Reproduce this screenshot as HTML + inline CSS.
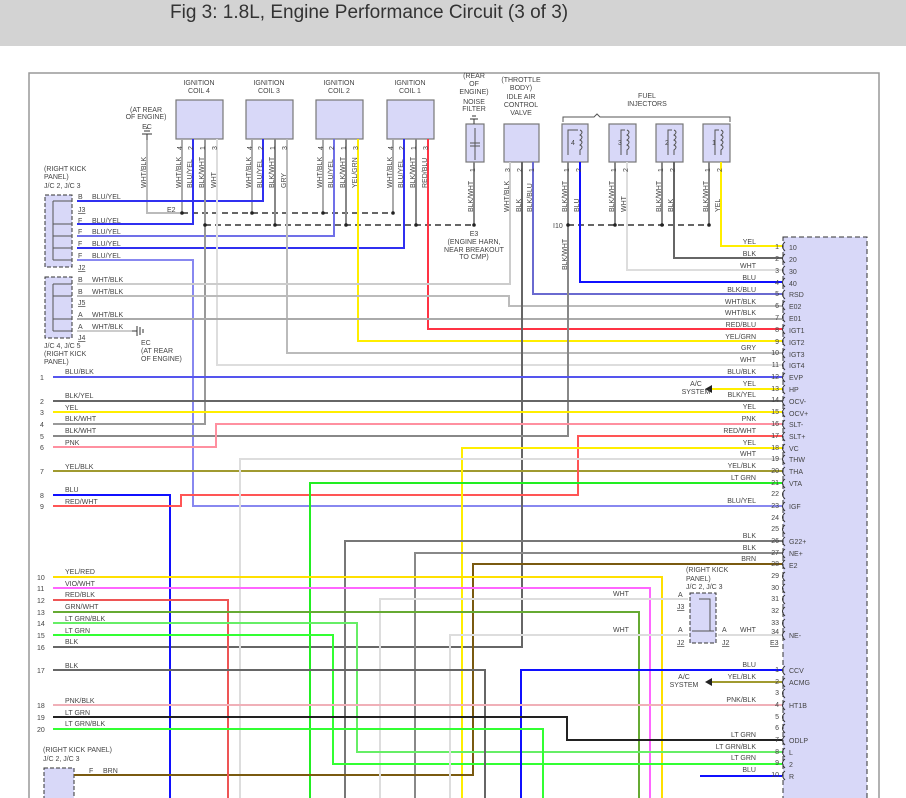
<!DOCTYPE html>
<html><head><meta charset="utf-8"><style>
html,body{margin:0;padding:0;background:#fff;width:906px;height:798px;overflow:hidden}
#hdr{position:absolute;left:0;top:0;width:906px;height:46px;background:#d3d3d3}
#hdr span{position:absolute;left:170px;top:2px;font:19px "Liberation Sans",sans-serif;color:#333}
svg{position:absolute;left:0;top:0}
text{font-family:"Liberation Sans",sans-serif;font-size:7px;fill:#444}
.w{fill:none;stroke-width:2}
</style></head><body>
<div id="hdr"><span>Fig 3: 1.8L, Engine Performance Circuit (3 of 3)</span></div>
<svg width="906" height="798" viewBox="0 0 906 798">
<!-- frame -->
<path d="M29,798 V73 H879 V798" fill="none" stroke="#999" stroke-width="1.5"/>
<!-- ECM -->
<rect x="783" y="237" width="84" height="570" fill="#d8d8f8" stroke="#333" stroke-dasharray="5,3"/>
<!-- component boxes -->
<g fill="#d8d8f8" stroke="#777" stroke-width="1.2">
<rect x="176" y="100" width="47" height="39"/><rect x="246" y="100" width="47" height="39"/>
<rect x="316" y="100" width="47" height="39"/><rect x="387" y="100" width="47" height="39"/>
<rect x="466" y="124" width="18" height="38"/><rect x="504" y="124" width="35" height="38"/>
<rect x="562" y="124" width="26" height="38"/><rect x="609" y="124" width="27" height="38"/>
<rect x="656" y="124" width="27" height="38"/><rect x="703" y="124" width="27" height="38"/>
</g>
<g fill="#d8d8f8" stroke="#333" stroke-dasharray="4,2">
<rect x="45" y="195" width="27" height="72"/><rect x="45" y="277" width="27" height="61"/>
<rect x="690" y="593" width="26" height="50"/><rect x="44" y="768" width="30" height="40"/>
</g>
<!-- kick panel internal -->
<g stroke="#555" fill="none" stroke-width="1">
<path d="M53,201 V260 M53,201 H72 M53,224 H72 M53,236 H72 M53,248 H72 M53,260 H72"/>
<path d="M53,284 V331 M53,284 H72 M53,296 H72 M53,319 H72 M53,331 H72"/>
<path d="M699,599 H710 V631 M692,631 H714"/>
</g>
<!-- injector coils -->
<g stroke="#555" fill="none" stroke-width="1">
<path d="M568,155 V130 H578 M621,155 V130 H625 M668,155 V130 H672 M715,155 V130 H719"/>
<path d="M580,130 q4,2 0,5 q4,2 0,5 q4,2 0,5 q4,2 0,5 V155 M627,130 q4,2 0,5 q4,2 0,5 q4,2 0,5 q4,2 0,5 V155 M674,130 q4,2 0,5 q4,2 0,5 q4,2 0,5 q4,2 0,5 V155 M721,130 q4,2 0,5 q4,2 0,5 q4,2 0,5 q4,2 0,5 V155"/>
<path d="M475,128 V160 M470,143 H480 M470,146 H480"/>
<path d="M563,122 V117 H594 l3,-3 l3,3 H730 V122"/>
</g>
<text x="571" y="145">4</text><text x="618" y="145">3</text><text x="665" y="145">2</text><text x="712" y="145">1</text>
<!-- dashed splices -->
<g stroke="#333" stroke-width="1.5" stroke-dasharray="6,4" fill="none">
<path d="M182,213 H393"/><path d="M205,225 H474"/><path d="M568,225 H709"/>
</g>
<!-- wires -->
<g class="w">
<path stroke="#bbb" d="M147,140 V213 H182"/>
<path stroke="#aaa" d="M182,139 V213 M252,139 V213 M323,139 V213 M393,139 V213"/>
<path stroke="#888" d="M275,139 V225 M346,139 V225 M416,139 V225 M474,162 V225 M615,162 V225 M662,162 V225 M709,162 V225"/>
<path stroke="#3030f0" d="M193,139 V224 H77 M263,139 V201 H77 M404,139 V248 H77"/>
<path stroke="#7070e8" d="M334,139 V236 H77"/>
<path stroke="#8888f0" d="M77,260 H193 V506 H782"/>
<path stroke="#999" d="M205,139 V424 H53"/>
<path stroke="#ddd" d="M217,139 V365 H782"/>
<path stroke="#bbb" d="M287,139 V353 H782"/>
<path stroke="#ffee00" d="M358,139 V341 H782"/>
<path stroke="#ff3344" d="M428,139 V329 H782"/>
<path stroke="#ccc" d="M77,284 H510 V162"/>
<path stroke="#bbb" d="M77,296 H509 V306 H782"/>
<path stroke="#aaa" d="M77,319 H782"/>
<path stroke="#ccc" d="M77,331 H132"/>
<path stroke="#666" d="M522,162 V647 H53"/>
<path stroke="#6a6ad0" d="M533,162 V294 H782"/>
<path stroke="#888" d="M568,162 V436 H53"/>
<path stroke="#1010ff" d="M580,162 V282 H782"/>
<path stroke="#ddd" d="M627,162 V270 H782"/>
<path stroke="#666" d="M674,162 V258 H782"/>
<path stroke="#ffee00" d="M721,162 V246 H782"/>
<path stroke="#5555ee" d="M53,377 H782"/>
<path stroke="#666" d="M53,401 H782"/>
<path stroke="#ffee00" d="M53,412 H782"/>
<path stroke="#ff90a0" d="M53,447 H216 V424 H782"/>
<path stroke="#a09a30" d="M53,471 H782"/>
<path stroke="#1010ff" d="M53,495 H170 V798"/>
<path stroke="#ff5555" d="M53,506 H181 V495 H578 V436 H782"/>
<path stroke="#ffee00" d="M710,389 H782"/>
<path stroke="#ffee00" d="M462,798 V448 H782"/>
<path stroke="#ddd" d="M240,798 V459 H782"/>
<path stroke="#22ee22" d="M310,798 V483 H782"/>
<path stroke="#777" d="M345,798 V541 H782"/>
<path stroke="#888" d="M415,798 V553 H782"/>
<path stroke="#7a5a10" d="M74,775 H473 V564 H782"/>
<path stroke="#ffe000" d="M53,577 H662 V798"/>
<path stroke="#ff66ff" d="M53,588 H650 V798"/>
<path stroke="#ee5555" d="M53,600 H228 V798"/>
<path stroke="#ddd" d="M380,798 V599 H688"/>
<path stroke="#66aa33" d="M53,612 H639 V798"/>
<path stroke="#66ee66" d="M53,623 H357 V752 H782"/>
<path stroke="#33ff33" d="M53,635 H333 V764 H782"/>
<path stroke="#ddd" d="M450,798 V635 H688 M718,635 H782"/>
<path stroke="#666" d="M53,670 H485 V798"/>
<path stroke="#1010ff" d="M521,798 V670 H782"/>
<path stroke="#a09a30" d="M710,682 H782"/>
<path stroke="#f0b0b8" d="M53,705 H782"/>
<path stroke="#222" d="M53,717 H567 V740 H782"/>
<path stroke="#33ff33" d="M53,729 H543 V798"/>
<path stroke="#1010ff" d="M700,776 H782"/>
</g>
<!-- splice dots -->
<g fill="#222">
<circle cx="182" cy="213" r="1.8"/><circle cx="252" cy="213" r="1.8"/><circle cx="323" cy="213" r="1.8"/><circle cx="393" cy="213" r="1.8"/>
<circle cx="205" cy="225" r="1.8"/><circle cx="275" cy="225" r="1.8"/><circle cx="346" cy="225" r="1.8"/><circle cx="416" cy="225" r="1.8"/><circle cx="474" cy="225" r="1.8"/>
<circle cx="568" cy="225" r="1.8"/><circle cx="615" cy="225" r="1.8"/><circle cx="662" cy="225" r="1.8"/><circle cx="709" cy="225" r="1.8"/>
<path d="M705,389 l7,-4 v8 z M705,682 l7,-4 v8 z"/>
</g>
<!-- grounds -->
<g stroke="#333" fill="none"><path d="M147,140 V134 M142,134 H152 M144,131 H150 M146,128 H148"/>
<path d="M132,331 H137 M137,326 V336 M140,327 V335 M143,329 V333"/>
<path d="M474,124 V119 M470,119 H478 M472,116 H476"/></g>
<!-- ECM pin brackets -->
<g stroke="#333" fill="none" stroke-width="1">
<path d="M785,242 q-5,4 0,9 M785,254 q-5,4 0,9 M785,266 q-5,4 0,9 M785,278 q-5,4 0,9 M785,290 q-5,4 0,9 M785,301 q-5,4 0,9 M785,313 q-5,4 0,9 M785,325 q-5,4 0,9 M785,337 q-5,4 0,9 M785,349 q-5,4 0,9 M785,361 q-5,4 0,9 M785,373 q-5,4 0,9 M785,385 q-5,4 0,9 M785,397 q-5,4 0,9 M785,408 q-5,4 0,9 M785,420 q-5,4 0,9 M785,432 q-5,4 0,9 M785,444 q-5,4 0,9 M785,455 q-5,4 0,9 M785,467 q-5,4 0,9 M785,479 q-5,4 0,9 M785,490 q-5,4 0,9 M785,502 q-5,4 0,9 M785,513 q-5,4 0,9 M785,525 q-5,4 0,9 M785,537 q-5,4 0,9 M785,549 q-5,4 0,9 M785,560 q-5,4 0,9 M785,572 q-5,4 0,9 M785,584 q-5,4 0,9 M785,595 q-5,4 0,9 M785,607 q-5,4 0,9 M785,619 q-5,4 0,9 M785,631 q-5,4 0,9 M785,666 q-5,4 0,9 M785,678 q-5,4 0,9 M785,689 q-5,4 0,9 M785,701 q-5,4 0,9 M785,713 q-5,4 0,9 M785,724 q-5,4 0,9 M785,736 q-5,4 0,9 M785,748 q-5,4 0,9 M785,759 q-5,4 0,9 M785,771 q-5,4 0,9"/>
</g>
<!-- top labels -->
<g text-anchor="middle">
<text x="199" y="85">IGNITION</text><text x="199" y="93">COIL 4</text>
<text x="269" y="85">IGNITION</text><text x="269" y="93">COIL 3</text>
<text x="339" y="85">IGNITION</text><text x="339" y="93">COIL 2</text>
<text x="410" y="85">IGNITION</text><text x="410" y="93">COIL 1</text>
<text x="146" y="112">(AT REAR</text><text x="146" y="119">OF ENGINE)</text><text x="147" y="129">EC</text>
<text x="474" y="78">(REAR</text><text x="474" y="86">OF</text><text x="474" y="94">ENGINE)</text><text x="474" y="104">NOISE</text><text x="474" y="111">FILTER</text>
<text x="521" y="82">(THROTTLE</text><text x="521" y="90">BODY)</text><text x="521" y="99">IDLE AIR</text><text x="521" y="107">CONTROL</text><text x="521" y="115">VALVE</text>
<text x="647" y="98">FUEL</text><text x="647" y="106">INJECTORS</text>
<text x="474" y="236">E3</text><text x="474" y="244">(ENGINE HARN,</text><text x="474" y="252">NEAR BREAKOUT</text><text x="474" y="259">TO CMP)</text>
</g>
<text x="167" y="212">E2</text><text x="553" y="228">I10</text>
<!-- vertical wire labels -->
<g>
<text transform="translate(146,188) rotate(-90)">WHT/BLK</text>
<text transform="translate(181,188) rotate(-90)">WHT/BLK</text><text transform="translate(192,188) rotate(-90)">BLU/YEL</text><text transform="translate(204,188) rotate(-90)">BLK/WHT</text><text transform="translate(216,188) rotate(-90)">WHT</text>
<text transform="translate(251,188) rotate(-90)">WHT/BLK</text><text transform="translate(262,188) rotate(-90)">BLU/YEL</text><text transform="translate(274,188) rotate(-90)">BLK/WHT</text><text transform="translate(286,188) rotate(-90)">GRY</text>
<text transform="translate(322,188) rotate(-90)">WHT/BLK</text><text transform="translate(333,188) rotate(-90)">BLU/YEL</text><text transform="translate(345,188) rotate(-90)">BLK/WHT</text><text transform="translate(357,188) rotate(-90)">YEL/GRN</text>
<text transform="translate(392,188) rotate(-90)">WHT/BLK</text><text transform="translate(403,188) rotate(-90)">BLU/YEL</text><text transform="translate(415,188) rotate(-90)">BLK/WHT</text><text transform="translate(427,188) rotate(-90)">RED/BLU</text>
<text transform="translate(182,150) rotate(-90)">4</text><text transform="translate(193,150) rotate(-90)">2</text><text transform="translate(205,150) rotate(-90)">1</text><text transform="translate(217,150) rotate(-90)">3</text>
<text transform="translate(252,150) rotate(-90)">4</text><text transform="translate(263,150) rotate(-90)">2</text><text transform="translate(275,150) rotate(-90)">1</text><text transform="translate(287,150) rotate(-90)">3</text>
<text transform="translate(323,150) rotate(-90)">4</text><text transform="translate(334,150) rotate(-90)">2</text><text transform="translate(346,150) rotate(-90)">1</text><text transform="translate(358,150) rotate(-90)">3</text>
<text transform="translate(393,150) rotate(-90)">4</text><text transform="translate(404,150) rotate(-90)">2</text><text transform="translate(416,150) rotate(-90)">1</text><text transform="translate(428,150) rotate(-90)">3</text>
<text transform="translate(473,212) rotate(-90)">BLK/WHT</text>
<text transform="translate(509,212) rotate(-90)">WHT/BLK</text><text transform="translate(521,212) rotate(-90)">BLK</text><text transform="translate(532,212) rotate(-90)">BLK/BLU</text>
<text transform="translate(567,212) rotate(-90)">BLK/WHT</text><text transform="translate(579,212) rotate(-90)">BLU</text>
<text transform="translate(614,212) rotate(-90)">BLK/WHT</text><text transform="translate(626,212) rotate(-90)">WHT</text>
<text transform="translate(661,212) rotate(-90)">BLK/WHT</text><text transform="translate(673,212) rotate(-90)">BLK</text>
<text transform="translate(708,212) rotate(-90)">BLK/WHT</text><text transform="translate(720,212) rotate(-90)">YEL</text>
<text transform="translate(567,270) rotate(-90)">BLK/WHT</text>
<text transform="translate(475,172) rotate(-90)">1</text><text transform="translate(510,172) rotate(-90)">3</text><text transform="translate(522,172) rotate(-90)">2</text><text transform="translate(534,172) rotate(-90)">1</text>
<text transform="translate(569,172) rotate(-90)">1</text><text transform="translate(581,172) rotate(-90)">2</text><text transform="translate(616,172) rotate(-90)">1</text><text transform="translate(628,172) rotate(-90)">2</text>
<text transform="translate(663,172) rotate(-90)">1</text><text transform="translate(675,172) rotate(-90)">2</text><text transform="translate(710,172) rotate(-90)">1</text><text transform="translate(722,172) rotate(-90)">2</text>
</g>
<!-- kick panel labels -->
<text x="44" y="171">(RIGHT KICK</text><text x="44" y="179">PANEL)</text><text x="44" y="188">J/C 2, J/C 3</text>
<text x="78" y="199">B</text><text x="92" y="199">BLU/YEL</text><text x="78" y="212" text-decoration="underline">J3</text>
<text x="78" y="223">F</text><text x="92" y="223">BLU/YEL</text><text x="78" y="234">F</text><text x="92" y="234">BLU/YEL</text>
<text x="78" y="246">F</text><text x="92" y="246">BLU/YEL</text><text x="78" y="258">F</text><text x="92" y="258">BLU/YEL</text>
<text x="78" y="270" text-decoration="underline">J2</text>
<text x="78" y="282">B</text><text x="92" y="282">WHT/BLK</text><text x="78" y="294">B</text><text x="92" y="294">WHT/BLK</text>
<text x="78" y="305" text-decoration="underline">J5</text>
<text x="78" y="317">A</text><text x="92" y="317">WHT/BLK</text><text x="78" y="329">A</text><text x="92" y="329">WHT/BLK</text>
<text x="78" y="340" text-decoration="underline">J4</text>
<text x="44" y="348">J/C 4, J/C 5</text><text x="44" y="356">(RIGHT KICK</text><text x="44" y="364">PANEL)</text>
<text x="141" y="345">EC</text><text x="141" y="353">(AT REAR</text><text x="141" y="361">OF ENGINE)</text>
<!-- left pin numbers and labels -->
<g>
<text x="40" y="380">1</text><text x="65" y="374">BLU/BLK</text>
<text x="40" y="404">2</text><text x="65" y="398">BLK/YEL</text>
<text x="40" y="415">3</text><text x="65" y="410">YEL</text>
<text x="40" y="427">4</text><text x="65" y="421">BLK/WHT</text>
<text x="40" y="439">5</text><text x="65" y="433">BLK/WHT</text>
<text x="40" y="450">6</text><text x="65" y="445">PNK</text>
<text x="40" y="474">7</text><text x="65" y="469">YEL/BLK</text>
<text x="40" y="498">8</text><text x="65" y="492">BLU</text>
<text x="40" y="509">9</text><text x="65" y="504">RED/WHT</text>
<text x="37" y="580">10</text><text x="65" y="574">YEL/RED</text>
<text x="37" y="591">11</text><text x="65" y="586">VIO/WHT</text>
<text x="37" y="603">12</text><text x="65" y="597">RED/BLK</text>
<text x="37" y="615">13</text><text x="65" y="609">GRN/WHT</text>
<text x="37" y="626">14</text><text x="65" y="621">LT GRN/BLK</text>
<text x="37" y="638">15</text><text x="65" y="633">LT GRN</text>
<text x="37" y="650">16</text><text x="65" y="644">BLK</text>
<text x="37" y="673">17</text><text x="65" y="668">BLK</text>
<text x="37" y="708">18</text><text x="65" y="703">PNK/BLK</text>
<text x="37" y="720">19</text><text x="65" y="715">LT GRN</text>
<text x="37" y="732">20</text><text x="65" y="726">LT GRN/BLK</text>
<text x="43" y="752">(RIGHT KICK PANEL)</text><text x="43" y="761">J/C 2, J/C 3</text>
<text x="89" y="773">F</text><text x="103" y="773">BRN</text>
</g>
<!-- middle labels -->
<text x="613" y="596">WHT</text><text x="613" y="632">WHT</text>
<text x="686" y="572">(RIGHT KICK</text><text x="686" y="581">PANEL)</text><text x="686" y="589">J/C 2, J/C 3</text>
<text x="678" y="597">A</text><text x="677" y="609" text-decoration="underline">J3</text>
<text x="678" y="632">A</text><text x="677" y="645" text-decoration="underline">J2</text>
<text x="722" y="632">A</text><text x="722" y="645" text-decoration="underline">J2</text>
<text x="740" y="632">WHT</text><text x="770" y="645" text-decoration="underline">E3</text>
<g text-anchor="middle"><text x="696" y="386">A/C</text><text x="696" y="394">SYSTEM</text>
<text x="684" y="679">A/C</text><text x="684" y="687">SYSTEM</text></g>
<!-- ECM right-aligned labels -->
<g text-anchor="end">
<text x="756" y="244">YEL</text><text x="779" y="249">1</text>
<text x="756" y="256">BLK</text><text x="779" y="261">2</text>
<text x="756" y="268">WHT</text><text x="779" y="273">3</text>
<text x="756" y="280">BLU</text><text x="779" y="285">4</text>
<text x="756" y="292">BLK/BLU</text><text x="779" y="296">5</text>
<text x="756" y="304">WHT/BLK</text><text x="779" y="308">6</text>
<text x="756" y="315">WHT/BLK</text><text x="779" y="320">7</text>
<text x="756" y="327">RED/BLU</text><text x="779" y="332">8</text>
<text x="756" y="339">YEL/GRN</text><text x="779" y="344">9</text>
<text x="756" y="350">GRY</text><text x="779" y="355">10</text>
<text x="756" y="362">WHT</text><text x="779" y="367">11</text>
<text x="756" y="374">BLU/BLK</text><text x="779" y="379">12</text>
<text x="756" y="386">YEL</text><text x="779" y="391">13</text>
<text x="756" y="397">BLK/YEL</text><text x="779" y="402">14</text>
<text x="756" y="409">YEL</text><text x="779" y="414">15</text>
<text x="756" y="421">PNK</text><text x="779" y="426">16</text>
<text x="756" y="433">RED/WHT</text><text x="779" y="438">17</text>
<text x="756" y="445">YEL</text><text x="779" y="450">18</text>
<text x="756" y="456">WHT</text><text x="779" y="461">19</text>
<text x="756" y="468">YEL/BLK</text><text x="779" y="473">20</text>
<text x="756" y="480">LT GRN</text><text x="779" y="485">21</text>
<text x="779" y="496">22</text>
<text x="756" y="503">BLU/YEL</text><text x="779" y="508">23</text>
<text x="779" y="520">24</text><text x="779" y="531">25</text>
<text x="756" y="538">BLK</text><text x="779" y="543">26</text>
<text x="756" y="550">BLK</text><text x="779" y="555">27</text>
<text x="756" y="561">BRN</text><text x="779" y="566">28</text>
<text x="779" y="578">29</text><text x="779" y="590">30</text><text x="779" y="601">31</text>
<text x="779" y="613">32</text><text x="779" y="625">33</text><text x="779" y="634">34</text>
<text x="756" y="667">BLU</text><text x="779" y="672">1</text>
<text x="756" y="679">YEL/BLK</text><text x="779" y="684">2</text>
<text x="779" y="695">3</text>
<text x="756" y="702">PNK/BLK</text><text x="779" y="707">4</text>
<text x="779" y="719">5</text><text x="779" y="730">6</text>
<text x="756" y="737">LT GRN</text><text x="779" y="742">7</text>
<text x="756" y="749">LT GRN/BLK</text><text x="779" y="754">8</text>
<text x="756" y="760">LT GRN</text><text x="779" y="765">9</text>
<text x="756" y="772">BLU</text><text x="779" y="777">10</text>
</g>
<!-- ECM signal names -->
<g>
<text x="789" y="250">10</text><text x="789" y="262">20</text><text x="789" y="274">30</text><text x="789" y="286">40</text>
<text x="789" y="297">RSD</text><text x="789" y="309">E02</text><text x="789" y="321">E01</text><text x="789" y="333">IGT1</text>
<text x="789" y="345">IGT2</text><text x="789" y="357">IGT3</text><text x="789" y="368">IGT4</text><text x="789" y="380">EVP</text>
<text x="789" y="392">HP</text><text x="789" y="404">OCV-</text><text x="789" y="416">OCV+</text><text x="789" y="427">SLT-</text>
<text x="789" y="439">SLT+</text><text x="789" y="451">VC</text><text x="789" y="462">THW</text><text x="789" y="474">THA</text>
<text x="789" y="486">VTA</text><text x="789" y="509">IGF</text><text x="789" y="544">G22+</text><text x="789" y="556">NE+</text>
<text x="789" y="568">E2</text><text x="789" y="638">NE-</text>
<text x="789" y="673">CCV</text><text x="789" y="685">ACMG</text><text x="789" y="708">HT1B</text>
<text x="789" y="743">ODLP</text><text x="789" y="755">L</text><text x="789" y="767">2</text><text x="789" y="779">R</text>
</g>
</svg>
</body></html>
